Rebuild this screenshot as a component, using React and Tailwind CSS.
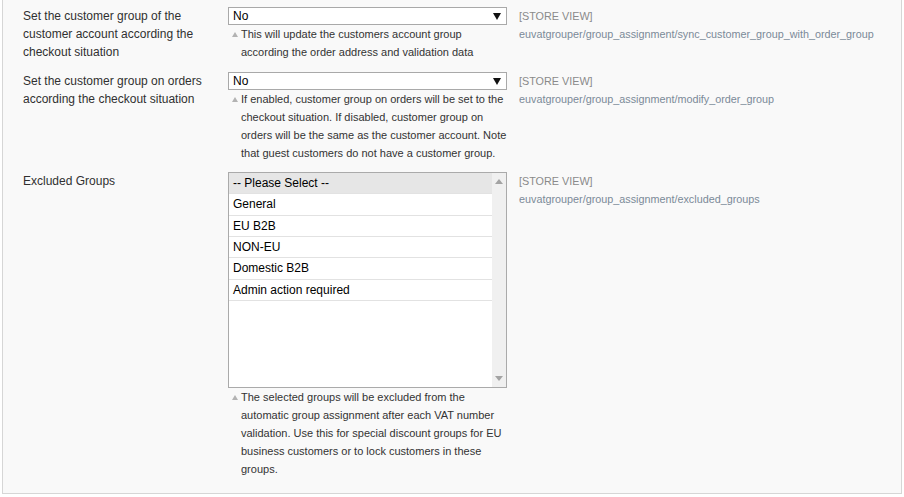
import React from 'react';

const font = { fontFamily: '"Liberation Sans", Arial, sans-serif' };

const groups = ['General', 'EU B2B', 'NON-EU', 'Domestic B2B', 'Admin action required'];

function NoteArrow() {
  return (
    <svg width="6" height="5" viewBox="0 0 6 5" className="mt-[7px] shrink-0">
      <polygon points="3,0 6,5 0,5" fill="#b3b3b3" />
    </svg>
  );
}

function Note({ children }) {
  return (
    <div className="flex gap-[3px] pl-[4px] text-[11px] leading-[18px] text-[#333]">
      <NoteArrow />
      <div>{children}</div>
    </div>
  );
}

function Dropdown({ value }) {
  return (
    <div className="flex h-[18px] items-center justify-between border border-[#a9a9a9] bg-white pl-[4px] pr-[5px] text-[12px] text-black">
      <span>{value}</span>
      <svg width="8" height="7" viewBox="0 0 8 7">
        <polygon points="0,0 8,0 4,7" fill="#111" />
      </svg>
    </div>
  );
}

function Scope({ path }) {
  return (
    <div className="pl-[12px] text-[10.8px] leading-[18px]">
      <div className="text-[#8a8a8a]">[STORE VIEW]</div>
      <div className="text-[#7b8a98]">{path}</div>
    </div>
  );
}

function Row({ label, children, path, className = '' }) {
  return (
    <div className={`flex ${className}`}>
      <div className="w-[205px] shrink-0 pr-[10px] text-[12px] leading-[18px] text-[#303030]">{label}</div>
      <div className="w-[279px] shrink-0">{children}</div>
      <Scope path={path} />
    </div>
  );
}

function GroupList() {
  return (
    <div className="flex h-[216px] border border-[#aaa] bg-white text-[12px] text-black">
      <div className="flex-1">
        <div className="flex h-[21.33px] items-center border-b border-[#e2e2e2] bg-[#e6e6e6] pl-[4px]">-- Please Select --</div>
        {groups.map((g) => (
          <div key={g} className="flex h-[21.33px] items-center border-b border-[#e2e2e2] pl-[4px]">
            {g}
          </div>
        ))}
      </div>
      <div className="flex w-[14px] flex-col items-center justify-between bg-[#f0f0f0] py-[6px]">
        <svg width="8" height="5" viewBox="0 0 8 5">
          <polygon points="4,0 8,5 0,5" fill="#a3a3a3" />
        </svg>
        <svg width="8" height="5" viewBox="0 0 8 5">
          <polygon points="0,0 8,0 4,5" fill="#a3a3a3" />
        </svg>
      </div>
    </div>
  );
}

export default function App() {
  return (
    <div className="h-[497px] w-[904px] bg-white" style={font}>
      <div className="ml-[2px] h-[494px] w-[900px] border-x border-b border-[#d6d6d6] bg-[#f9f9f9] pl-[20px] pt-[7px]">
        <Row
          label="Set the customer group of the customer account according the checkout situation"
          path="euvatgrouper/group_assignment/sync_customer_group_with_order_group"
        >
          <Dropdown value="No" />
          <Note>This will update the customers account group according the order address and validation data</Note>
        </Row>
        <Row
          className="mt-[11px]"
          label="Set the customer group on orders according the checkout situation"
          path="euvatgrouper/group_assignment/modify_order_group"
        >
          <Dropdown value="No" />
          <Note>
            If enabled, customer group on orders will be set to the checkout situation. If disabled, customer group on
            orders will be the same as the customer account. Note that guest customers do not have a customer group.
          </Note>
        </Row>
        <Row
          className="mt-[10px]"
          label="Excluded Groups"
          path="euvatgrouper/group_assignment/excluded_groups"
        >
          <GroupList />
          <Note>
            The selected groups will be excluded from the automatic group assignment after each VAT number validation.
            Use this for special discount groups for EU business customers or to lock customers in these groups.
          </Note>
        </Row>
      </div>
    </div>
  );
}
